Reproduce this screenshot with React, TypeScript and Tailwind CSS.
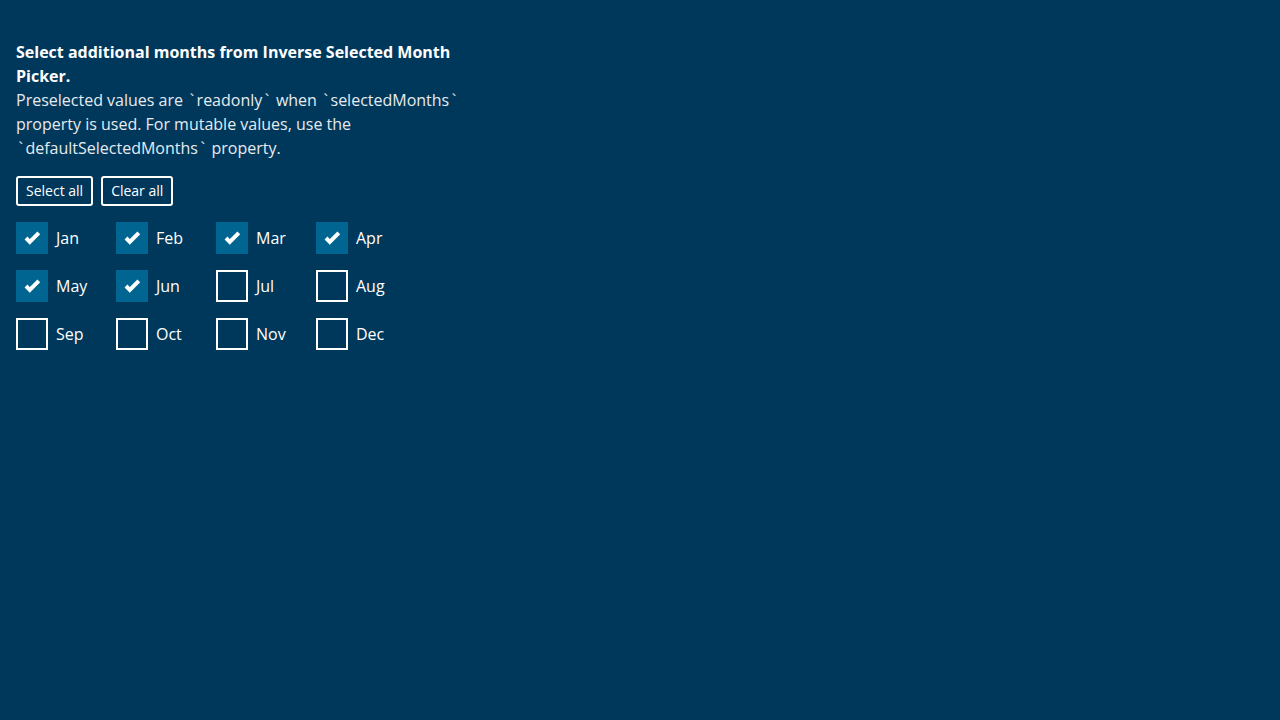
const MONTHS = ["Jan", "Feb", "Mar", "Apr", "May", "Jun", "Jul", "Aug", "Sep", "Oct", "Nov", "Dec"];
const SELECTED = ["Jan", "Feb", "Mar", "Apr", "May", "Jun"];

function Check() {
  return (
    <svg width="32" height="32" viewBox="0 0 32 32" fill="none">
      <path d="M10 16 L13.8 19.8 L22.8 10.8" stroke="white" strokeWidth="4" strokeLinecap="butt" strokeLinejoin="miter" />
    </svg>
  );
}

// backtick with a bit of room around it, like the reference font draws it
function Tick() {
  return <span className="mx-[2.5px]">`</span>;
}

function MonthBox({ label, checked }: { label: string; checked: boolean }) {
  return (
    <label className="flex items-center gap-2 w-[100px] h-8">
      {checked ? (
        <span className="w-8 h-8 bg-[#006691] flex items-center justify-center">
          <Check />
        </span>
      ) : (
        <span className="w-8 h-8 border-2 border-white" />
      )}
      <span className="text-base text-white">{label}</span>
    </label>
  );
}

export default function App() {
  return (
    <div
      className="min-h-[720px] bg-[#00385c] px-4 pt-10 text-white"
      style={{ fontFamily: '"Open Sans", "Noto Sans", sans-serif' }}
    >
      <div className="w-[460px] text-base leading-6">
        <p className="font-bold">Select additional months from Inverse Selected Month Picker.</p>
        <p className="text-[#e6ebef]">
          Preselected values are <Tick />readonly<Tick /> when <Tick />selectedMonths<Tick /> property is used. For
          mutable values, use the <Tick />defaultSelectedMonths<Tick /> property.
        </p>
      </div>

      <div className="flex gap-2 mt-4">
        <button className="h-[30px] px-2 border-2 border-white rounded-[3px] text-sm">Select all</button>
        <button className="h-[30px] px-2 border-2 border-white rounded-[3px] text-sm">Clear all</button>
      </div>

      <div className="grid grid-cols-[repeat(4,100px)] gap-y-4 mt-4">
        {MONTHS.map((m) => (
          <MonthBox key={m} label={m} checked={SELECTED.includes(m)} />
        ))}
      </div>
    </div>
  );
}
